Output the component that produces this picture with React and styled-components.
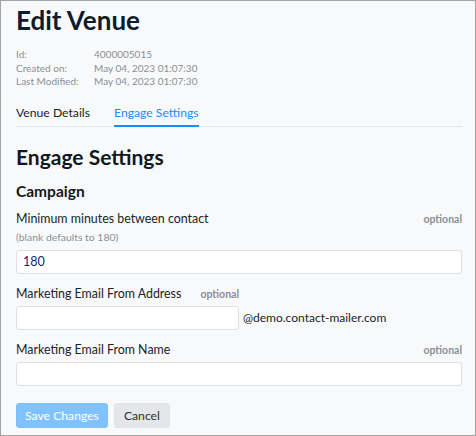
import React from "react";
import styled, { createGlobalStyle } from "styled-components";

const FONT = `"Lato", "Noto Sans", sans-serif`;

const Global = createGlobalStyle`
  html, body { margin: 0; padding: 0; }
  body { font-family: ${FONT}; background: #fff; }
  * { box-sizing: border-box; }
`;

const Frame = styled.div`
  width: 476px;
  height: 436px;
  border: 1px solid #a3a3a3;
  background: #f8f9fa;
  padding: 4px 13px 0 15px;
  overflow: hidden;
  color: #212529;
`;

const Title = styled.h1`
  margin: 0;
  font-size: 26px;
  font-weight: 700;
  line-height: 30px;
  color: #0f1b2d;
`;

const Meta = styled.dl`
  margin: 13px 0 0;
  display: grid;
  grid-template-columns: 78px auto;
  font-size: 10px;
  line-height: 13.5px;
  color: #8a8f96;
  dt, dd { margin: 0; }
`;

const Tabs = styled.div`
  display: flex;
  gap: 24px;
  margin-top: 12px;
  border-bottom: 1px solid #e3e6ea;
`;

const Tab = styled.div`
  font-size: 12.2px;
  line-height: 17px;
  padding: 3px 0 4px;
  color: ${(p) => (p.$active ? "#1a8cff" : "#1d2228")};
  border-bottom: 2px solid ${(p) => (p.$active ? "#1a8cff" : "transparent")};
  margin-bottom: -1px;
`;

const H2 = styled.h2`
  margin: 17px 0 0;
  font-size: 21px;
  font-weight: 700;
  line-height: 26px;
  color: #111821;
`;

const H3 = styled.h3`
  margin: 11px 0 0;
  font-size: 15.5px;
  font-weight: 700;
  line-height: 20px;
  color: #111821;
`;

const Field = styled.div`
  margin-top: ${(p) => p.$mt}px;
`;

const LabelRow = styled.div`
  display: flex;
  align-items: baseline;
  justify-content: space-between;
  width: ${(p) => (p.$w ? p.$w : "auto")};
`;

const Label = styled.label`
  font-size: 12.4px;
  line-height: 17px;
  color: #1d2228;
`;

const Optional = styled.span`
  font-size: 10.5px;
  font-weight: 700;
  color: #8a8f96;
`;

const Help = styled.div`
  font-size: 10.4px;
  line-height: 13px;
  color: #8a8f96;
  margin-top: 4px;
`;

const InputRow = styled.div`
  display: flex;
  align-items: center;
  gap: 4px;
  margin-top: ${(p) => p.$mt ?? 3.5}px;
`;

const Input = styled.input`
  width: ${(p) => p.$w || "100%"};
  height: 24px;
  border: 1px solid #dcdfe3;
  border-radius: 3px;
  background: #fff;
  padding: 0 6px;
  font-family: ${FONT};
  font-size: 12.5px;
  color: #1a1f6b;
  outline: none;
`;

const Suffix = styled.span`
  font-size: 12px;
  color: #1d2228;
`;

const Buttons = styled.div`
  display: flex;
  gap: 6px;
  margin-top: 17px;
`;

const Button = styled.button`
  height: 25px;
  border: 1px solid ${(p) => (p.$primary ? "#7cc0fb" : "#e2e3e6")};
  background: ${(p) => (p.$primary ? "#80c2fc" : "#e5e6e9")};
  color: ${(p) => (p.$primary ? "#fff" : "#2a2f35")};
  border-radius: 3px;
  padding: 0 ${(p) => (p.$primary ? 8 : 9)}px;
  font-family: ${FONT};
  font-size: 12.2px;
`;

export default function App() {
  return (
    <>
      <Global />
      <Frame>
        <Title>Edit Venue</Title>
        <Meta>
          <dt>Id:</dt>
          <dd>4000005015</dd>
          <dt>Created on:</dt>
          <dd>May 04, 2023 01:07:30</dd>
          <dt>Last Modified:</dt>
          <dd>May 04, 2023 01:07:30</dd>
        </Meta>
        <Tabs>
          <Tab>Venue Details</Tab>
          <Tab $active>Engage Settings</Tab>
        </Tabs>
        <H2>Engage Settings</H2>
        <H3>Campaign</H3>
        <Field $mt={9.5}>
          <LabelRow>
            <Label>Minimum minutes between contact</Label>
            <Optional>optional</Optional>
          </LabelRow>
          <Help>(blank defaults to 180)</Help>
          <InputRow $mt={5.5}>
            <Input defaultValue="180" />
          </InputRow>
        </Field>
        <Field $mt={11.5}>
          <LabelRow $w="223px">
            <Label>Marketing Email From Address</Label>
            <Optional>optional</Optional>
          </LabelRow>
          <InputRow>
            <Input $w="223px" />
            <Suffix>@demo.contact-mailer.com</Suffix>
          </InputRow>
        </Field>
        <Field $mt={11.5}>
          <LabelRow>
            <Label>Marketing Email From Name</Label>
            <Optional>optional</Optional>
          </LabelRow>
          <InputRow>
            <Input />
          </InputRow>
        </Field>
        <Buttons>
          <Button $primary>Save Changes</Button>
          <Button>Cancel</Button>
        </Buttons>
      </Frame>
    </>
  );
}
